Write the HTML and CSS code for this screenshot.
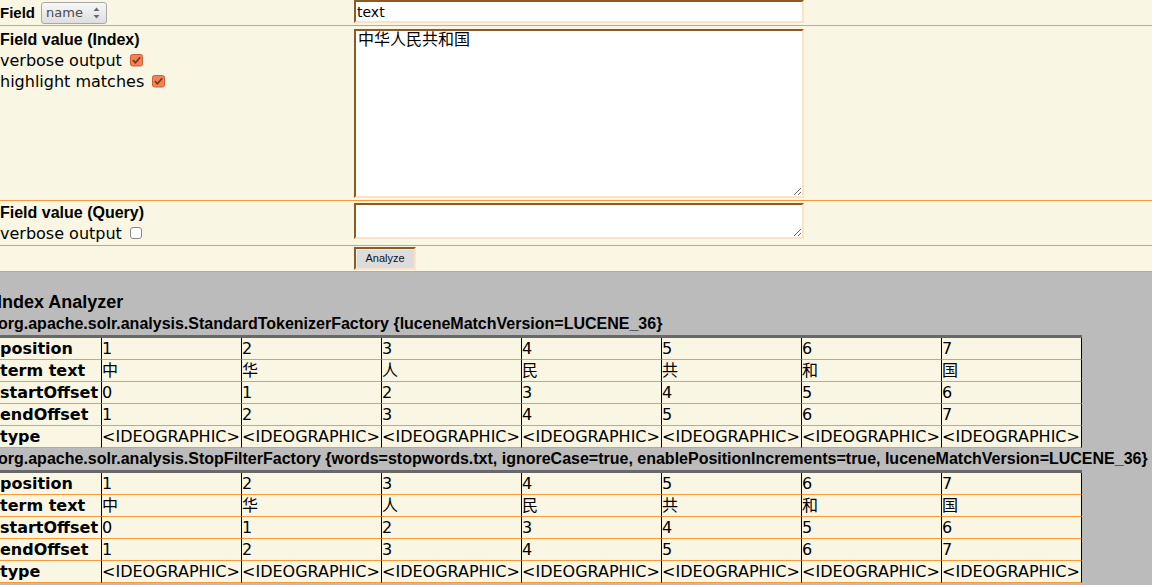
FILE: index.html
```html
<!DOCTYPE html>
<html>
<head>
<meta charset="utf-8">
<title>Solr Analysis</title>
<link rel="stylesheet" href="styles.css">
</head>
<body>
<div class="form">
  <div class="row r1">
    <div class="lab lab1"><b class="field">Field</b><span class="select"><span class="seltext">name</span><svg class="arrows" width="9" height="21" viewBox="0 0 9 21"><polygon points="1.5,9 4.5,5.5 7.5,9" fill="#6a6a6a"/><polygon points="1.5,13 4.5,16.5 7.5,13" fill="#6a6a6a"/></svg></span></div>
    <div class="ctl"><input class="std text" type="text" value="text"></div>
  </div>
  <div class="row r2">
    <div class="lab">
      <div class="title">Field value (Index)</div>
      <div class="opt">verbose output <svg class="cb" width="13" height="13" viewBox="0 0 13 13"><rect x="0.5" y="0.5" width="12" height="11.5" rx="2" fill="#f08458" stroke="#c85f36"/><path d="M3 6.2 L5.4 8.8 L10.2 3.2" fill="none" stroke="#7a3416" stroke-width="1.7"/></svg></div>
      <div class="opt">highlight matches <svg class="cb" width="13" height="13" viewBox="0 0 13 13"><rect x="0.5" y="0.5" width="12" height="11.5" rx="2" fill="#f08458" stroke="#c85f36"/><path d="M3 6.2 L5.4 8.8 L10.2 3.2" fill="none" stroke="#7a3416" stroke-width="1.7"/></svg></div>
    </div>
    <div class="ctl"><textarea class="std ta1">中华人民共和国</textarea></div>
  </div>
  <div class="row r3">
    <div class="lab">
      <div class="title">Field value (Query)</div>
      <div class="opt">verbose output <svg class="cb" width="13" height="13" viewBox="0 0 13 13"><rect x="0.5" y="0.5" width="11" height="11" rx="2.5" fill="#ffffff" stroke="#8a8a8a"/></svg></div>
    </div>
    <div class="ctl"><textarea class="std ta2"></textarea></div>
  </div>
  <div class="row r4">
    <div class="lab"></div>
    <div class="ctl"><button class="btn" type="button">Analyze</button></div>
  </div>
</div>

<div class="results">
  <h2>Index Analyzer</h2>
  <h3>org.apache.solr.analysis.StandardTokenizerFactory {luceneMatchVersion=LUCENE_36}</h3>
  <table class="analysis">
    <tr><th>position</th><td>1</td><td>2</td><td>3</td><td>4</td><td>5</td><td>6</td><td>7</td></tr>
    <tr><th>term text</th><td>中</td><td>华</td><td>人</td><td>民</td><td>共</td><td>和</td><td>国</td></tr>
    <tr><th>startOffset</th><td>0</td><td>1</td><td>2</td><td>3</td><td>4</td><td>5</td><td>6</td></tr>
    <tr><th>endOffset</th><td>1</td><td>2</td><td>3</td><td>4</td><td>5</td><td>6</td><td>7</td></tr>
    <tr><th>type</th><td>&lt;IDEOGRAPHIC&gt;</td><td>&lt;IDEOGRAPHIC&gt;</td><td>&lt;IDEOGRAPHIC&gt;</td><td>&lt;IDEOGRAPHIC&gt;</td><td>&lt;IDEOGRAPHIC&gt;</td><td>&lt;IDEOGRAPHIC&gt;</td><td>&lt;IDEOGRAPHIC&gt;</td></tr>
  </table>
  <h3>org.apache.solr.analysis.StopFilterFactory {words=stopwords.txt, ignoreCase=true, enablePositionIncrements=true, luceneMatchVersion=LUCENE_36}</h3>
  <table class="analysis">
    <tr><th>position</th><td>1</td><td>2</td><td>3</td><td>4</td><td>5</td><td>6</td><td>7</td></tr>
    <tr><th>term text</th><td>中</td><td>华</td><td>人</td><td>民</td><td>共</td><td>和</td><td>国</td></tr>
    <tr><th>startOffset</th><td>0</td><td>1</td><td>2</td><td>3</td><td>4</td><td>5</td><td>6</td></tr>
    <tr><th>endOffset</th><td>1</td><td>2</td><td>3</td><td>4</td><td>5</td><td>6</td><td>7</td></tr>
    <tr><th>type</th><td>&lt;IDEOGRAPHIC&gt;</td><td>&lt;IDEOGRAPHIC&gt;</td><td>&lt;IDEOGRAPHIC&gt;</td><td>&lt;IDEOGRAPHIC&gt;</td><td>&lt;IDEOGRAPHIC&gt;</td><td>&lt;IDEOGRAPHIC&gt;</td><td>&lt;IDEOGRAPHIC&gt;</td></tr>
  </table>
</div>
</body>
</html>
```
FILE: styles.css
```css
html, body {
  margin: 0;
  padding: 0;
}
body {
  background: #bbbbbb;
  color: #000;
  font-family: "DejaVu Sans", "Noto Sans CJK SC", sans-serif;
  overflow: hidden;
}

.form {
  background: #faf6e4;
}
.row {
  display: grid;
  grid-template-columns: 354px 450px;
  border-bottom: 1px solid #f99a3a;
  box-sizing: content-box;
}
.r1 { height: 25px; }
.r2 { height: 174px; }
.r3 { height: 44px; }
.r4 { height: 25px; }

.lab {
  font-family: "DejaVu Sans", sans-serif;
  font-size: 16px;
}
.lab1 {
  display: flex;
  align-items: center;
  height: 25px;
}
.field {
  font-family: "Liberation Sans", Arial, sans-serif;
  font-size: 15px;
  font-weight: bold;
  line-height: 25px;
}
.select {
  display: inline-flex;
  align-items: center;
  justify-content: space-between;
  box-sizing: border-box;
  margin-left: 6px;
  width: 66px;
  height: 22px;
  padding: 0 5px 0 4px;
  border: 1px solid #a8a8a8;
  border-radius: 3px;
  background: linear-gradient(#f7f7f7, #dedede);
  font-size: 13px;
  color: #4a4a4a;
}
.seltext { line-height: 20px; }
.arrows { display: block; }

.r2 .lab { padding-top: 4px; }
.r3 .lab { padding-top: 2px; }
.title {
  font-family: "Liberation Sans", Arial, sans-serif;
  font-weight: bold;
  font-size: 16px;
  line-height: 20px;
}
.opt {
  line-height: 21px;
  white-space: nowrap;
}
.cb {
  vertical-align: -1px;
  margin-left: 3px;
}

.std {
  box-sizing: border-box;
  display: block;
  margin: 0;
  width: 450px;
  background: #fff;
  color: #000;
  border-style: solid;
  border-width: 2px;
  border-color: #8c5a24 #fde2c5 #fde2c5 #8c5a24;
  font-family: "DejaVu Sans", "Noto Sans CJK SC", sans-serif;
  outline: none;
}
.text {
  height: 23px;
  padding: 0 1px;
  font-size: 14px;
}
.ta1 {
  margin-top: 3px;
  height: 169px;
  padding: 0 2px;
  font-size: 16px;
  line-height: 18px;
}
.ta2 {
  margin-top: 2px;
  height: 36px;
  padding: 0 2px;
  font-size: 16px;
}
.btn {
  display: block;
  margin: 1px 0 0 0;
  box-sizing: border-box;
  width: 62px;
  height: 23px;
  padding: 0 0 1px 0;
  background: #dcdcdc;
  border-style: solid;
  border-width: 2px;
  border-color: #8c5a24 #fde2c5 #fde2c5 #8c5a24;
  box-shadow: inset 1px 1px 0 #f0f0f0;
  font-family: "Liberation Sans", Arial, sans-serif;
  font-size: 11px;
  color: #0a1220;
}

.results {
  padding-top: 19px;
}
h2 {
  margin: 0 0 0 -3px;
  font-family: "Liberation Sans", Arial, sans-serif;
  font-size: 18px;
  font-weight: bold;
  line-height: 22px;
}
h3 {
  margin: 0 0 0 -2px;
  font-family: "Liberation Sans", Arial, sans-serif;
  font-size: 16px;
  font-weight: bold;
  line-height: 22px;
  white-space: nowrap;
}
.analysis {
  border-collapse: separate;
  border-spacing: 0;
  border-top: 3px solid #686868;
  background: #faf6e4;
  font-family: "DejaVu Sans", "Noto Sans CJK SC", sans-serif;
  font-size: 16px;
}
.analysis th, .analysis td {
  padding: 0;
  height: 21px;
  line-height: 21px;
  text-align: left;
  vertical-align: top;
  white-space: nowrap;
  border-bottom: 1px solid #f99a3a;
  border-right: 1px solid #000;
}
.analysis th {
  width: 101px;
  font-weight: bold;
}
.analysis td {
  width: 139px;
  font-weight: normal;
}
```
